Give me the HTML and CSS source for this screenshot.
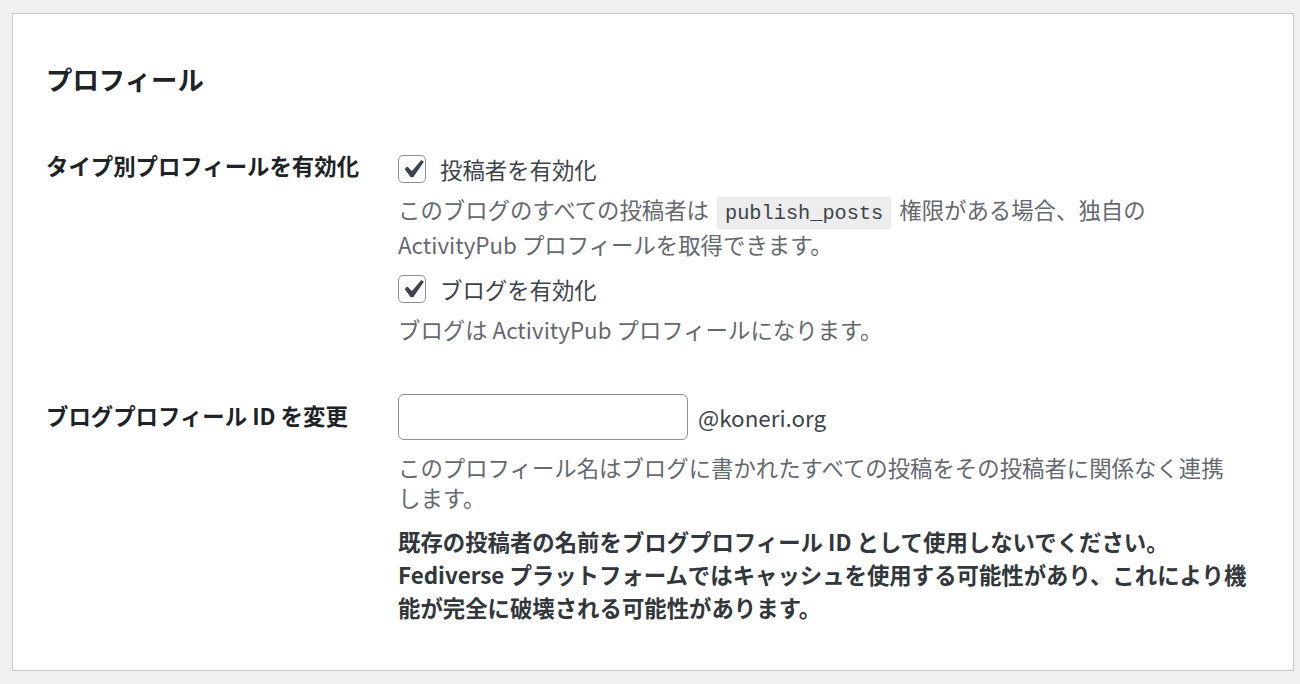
FILE: index.html
```html
<!DOCTYPE html>
<html lang="ja">
<head>
<meta charset="utf-8">
<title>プロフィール</title>
<link rel="stylesheet" href="styles.css">
</head>
<body>
<div class="card">
  <h2 class="title">プロフィール</h2>
  <div class="row row--first">
    <div class="th">タイプ別プロフィールを有効化</div>
    <div class="td">
      <label class="check">
        <span class="box"><svg viewBox="0 0 20 20" aria-hidden="true"><path d="M14.83 4.89l1.34.94-5.81 8.38H9.02L5.78 9.67l1.34-1.25 2.57 2.4z"/></svg></span>
        <span class="check-label">投稿者を有効化</span>
      </label>
      <p class="desc desc--loose">このブログのすべての投稿者は <code class="code">publish_posts</code> 権限がある場合、独自の<br>ActivityPub プロフィールを取得できます。</p>
      <label class="check check--second">
        <span class="box"><svg viewBox="0 0 20 20" aria-hidden="true"><path d="M14.83 4.89l1.34.94-5.81 8.38H9.02L5.78 9.67l1.34-1.25 2.57 2.4z"/></svg></span>
        <span class="check-label">ブログを有効化</span>
      </label>
      <p class="desc desc--loose">ブログは ActivityPub プロフィールになります。</p>
    </div>
  </div>
  <div class="row row--second">
    <div class="th th--input">ブログプロフィール ID を変更</div>
    <div class="td">
      <div class="field">
        <input class="input" type="text" value="" aria-label="ブログプロフィール ID">
        <span class="suffix">@koneri.org</span>
      </div>
      <p class="desc">このプロフィール名はブログに書かれたすべての投稿をその投稿者に関係なく連携<br>します。</p>
      <p class="warn">既存の投稿者の名前をブログプロフィール ID として使用しないでください。<br>Fediverse プラットフォームではキャッシュを使用する可能性があり、これにより機<br>能が完全に破壊される可能性があります。</p>
    </div>
  </div>
</div>
</body>
</html>
```
FILE: styles.css
```css
* {
  box-sizing: border-box;
}

html,
body {
  margin: 0;
  padding: 0;
}

body {
  background: #f0f0f1;
  font-family: "Noto Sans CJK JP", "Noto Sans", sans-serif;
  color: #1d2327;
  padding: 13px 0 15px 12px;
}

.card {
  width: 1282px;
  background: #fff;
  border: 1px solid #c8c9cc;
  padding: 48px 33px 46px 33px;
}

.title {
  margin: 0;
  font-size: 26.4px;
  line-height: 34px;
  font-weight: 700;
  color: #1d2327;
}

.row {
  display: flex;
}

.row--first {
  margin-top: 54px;
}

.row--second {
  margin-top: 47px;
}

.th {
  width: 352px;
  flex: none;
  font-size: 22.4px;
  line-height: 30px;
  font-weight: 700;
  color: #1d2327;
}

.th--input {
  padding-top: 6px;
}

.td {
  flex: 1;
  min-width: 0;
}

.check {
  display: flex;
  align-items: center;
  height: 34px;
  margin-top: 2px;
  font-size: 22.4px;
  color: #3c434a;
}

.check--second {
  margin-top: 10px;
}

.box {
  width: 28px;
  height: 28px;
  flex: none;
  border: 1px solid #8c8f94;
  border-radius: 5px;
  margin-right: 14px;
  display: flex;
  align-items: center;
  justify-content: center;
}

.box svg {
  width: 37px;
  height: 37px;
  flex: none;
  fill: #3c434a;
}

.desc {
  margin: 12px 0 0;
  font-size: 22.4px;
  line-height: 30px;
  color: #646970;
}

.desc--loose {
  margin-top: 6px;
  line-height: 35px;
}

.code {
  font-family: "Liberation Mono", "DejaVu Sans Mono", monospace;
  font-size: 20.3px;
  line-height: 1;
  padding: 5px 8px 4px;
  margin: 0 3px;
  background: #ededee;
  color: #3c434a;
}

.field {
  display: flex;
  align-items: center;
}

.input {
  width: 290px;
  height: 46px;
  margin: 0;
  padding: 0 12px;
  border: 1px solid #8c8f94;
  border-radius: 6px;
  background: #fff;
  font: inherit;
  font-size: 22.4px;
  color: #2c3338;
}

.suffix {
  margin-left: 10px;
  font-size: 22.4px;
  color: #3c434a;
}

.warn {
  margin: 12.5px 0 0;
  font-size: 22.4px;
  line-height: 33px;
  font-weight: 700;
  color: #32373c;
}
```
